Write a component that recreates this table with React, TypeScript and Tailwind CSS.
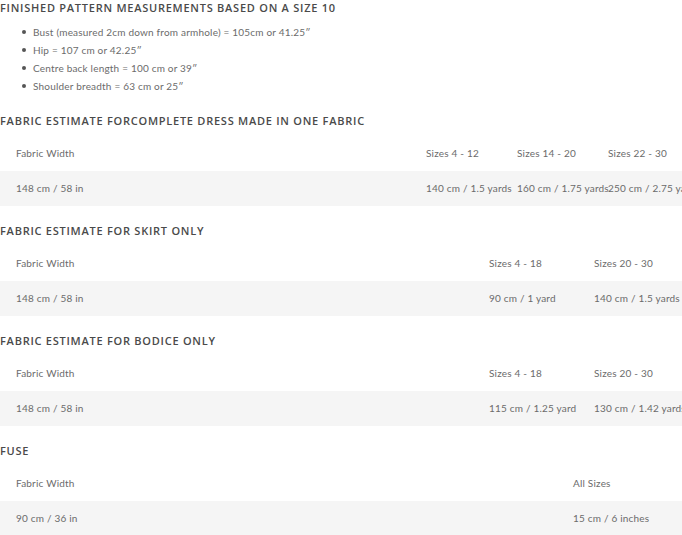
const measurements = [
  'Bust (measured 2cm down from armhole) = 105cm or 41.25″',
  'Hip = 107 cm or 42.25″',
  'Centre back length = 100 cm or 39″',
  'Shoulder breadth = 63 cm or 25″',
]

const tables = [
  {
    title: 'Fabric estimate forcomplete dress made in one fabric',
    cols: 'grid-cols-[426px_91px_91px_1fr]',
    head: ['Fabric Width', 'Sizes 4 - 12', 'Sizes 14 - 20', 'Sizes 22 - 30'],
    row: ['148 cm / 58 in', '140 cm / 1.5 yards', '160 cm / 1.75 yards', '250 cm / 2.75 yards'],
  },
  {
    title: 'Fabric estimate for skirt only',
    cols: 'grid-cols-[489px_105px_1fr]',
    head: ['Fabric Width', 'Sizes 4 - 18', 'Sizes 20 - 30'],
    row: ['148 cm / 58 in', '90 cm / 1 yard', '140 cm / 1.5 yards'],
  },
  {
    title: 'Fabric estimate for bodice only',
    cols: 'grid-cols-[489px_105px_1fr]',
    head: ['Fabric Width', 'Sizes 4 - 18', 'Sizes 20 - 30'],
    row: ['148 cm / 58 in', '115 cm / 1.25 yard', '130 cm / 1.42 yards'],
  },
  {
    title: 'Fuse',
    cols: 'grid-cols-[573px_1fr]',
    head: ['Fabric Width', 'All Sizes'],
    row: ['90 cm / 36 in', '15 cm / 6 inches'],
  },
]

function Heading({ children }: { children: React.ReactNode }) {
  return (
    <h3 className="h-4 font-['Open_Sans',sans-serif] text-[11px] leading-4 font-semibold uppercase tracking-[0.75px] text-[#4a4a4a] whitespace-nowrap">
      {children}
    </h3>
  )
}

function EstimateTable({ t }: { t: (typeof tables)[number] }) {
  return (
    <div className="mb-[17px]">
      <Heading>{t.title}</Heading>
      <div className="mt-[7px] text-[10px] tracking-[0.2px] text-[#6b6b6b] whitespace-nowrap">
        <div className={`grid ${t.cols} h-[35px] items-center`}>
          {t.head.map((h, i) => (
            <div key={h} className={i === 0 ? 'pl-4' : ''}>{h}</div>
          ))}
        </div>
        <div className={`grid ${t.cols} h-[35px] items-center bg-[#f5f5f5]`}>
          {t.row.map((c, i) => (
            <div key={i} className={i === 0 ? 'pl-4' : ''}>{c}</div>
          ))}
        </div>
      </div>
    </div>
  )
}

export default function App() {
  return (
    <div className="w-[682px] h-[535px] overflow-hidden bg-white font-['Lato',sans-serif]">
      <Heading>Finished pattern measurements based on a size 10</Heading>
      <ul className="mt-[7px] mb-[18px]">
        {measurements.map((m) => (
          <li key={m} className="flex items-center h-[18px] text-[10px] tracking-[0.2px] text-[#6b6b6b]">
            <span className="ml-[22px] mr-[7px] h-1 w-1 rounded-full bg-[#555]" />
            {m}
          </li>
        ))}
      </ul>
      {tables.map((t) => (
        <EstimateTable key={t.title} t={t} />
      ))}
    </div>
  )
}
